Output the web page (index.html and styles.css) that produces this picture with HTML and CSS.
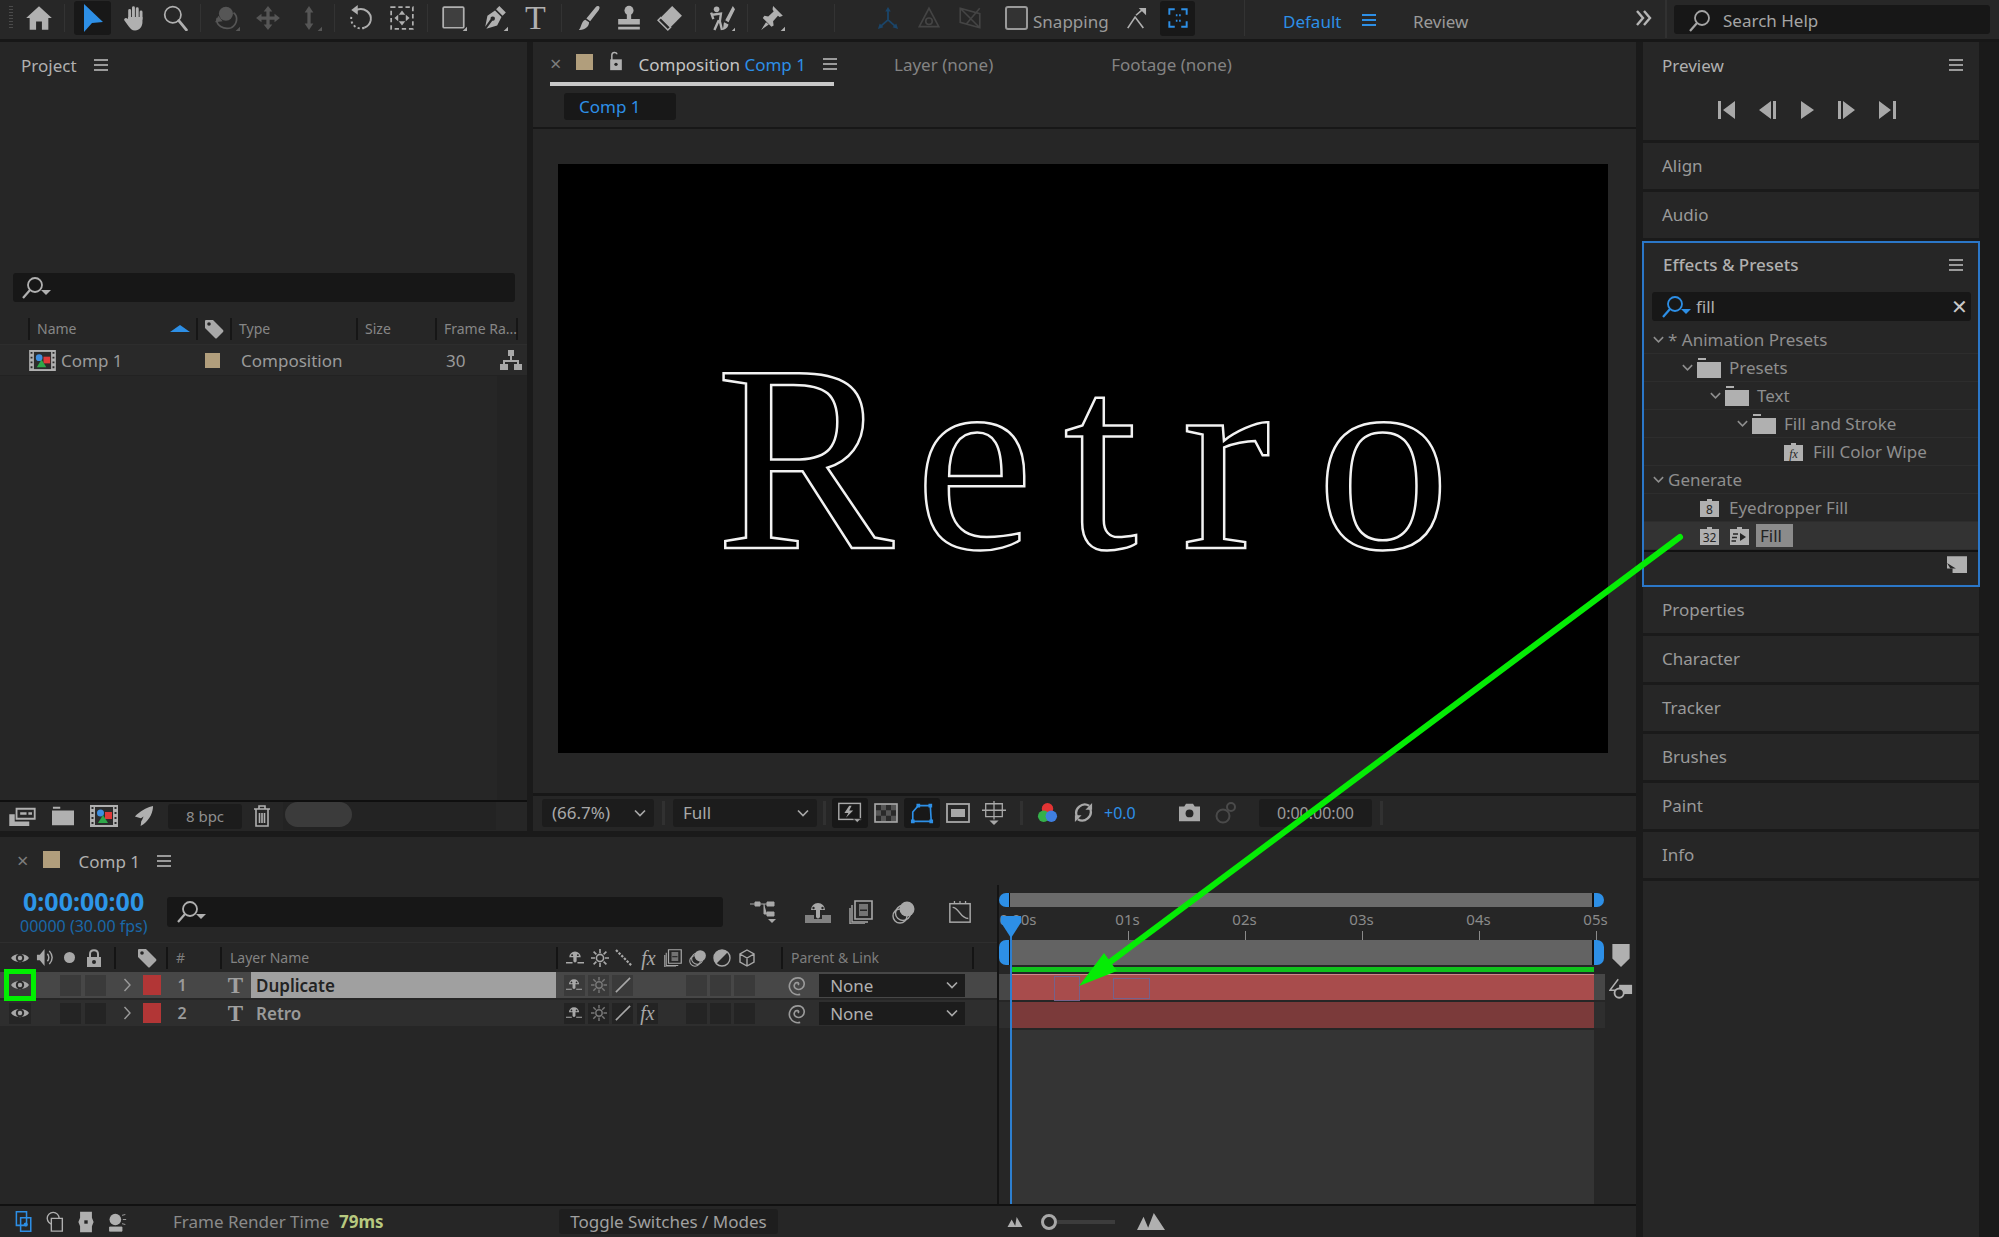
FILE: index.html
```html
<!DOCTYPE html>
<html>
<head>
    <title>After Effects - Retro</title>
    <link rel="stylesheet" href="styles.css">
</head>
<body>
    <!-- icon sprite -->
    <svg class="sprite">
        <symbol id="home" viewBox="0 0 24 24"><path d="M12 2 L23 12 L20 12 L20 22 L14.5 22 L14.5 15 L9.5 15 L9.5 22 L4 22 L4 12 L1 12 Z" fill="currentColor"/></symbol>
        <symbol id="arrow" viewBox="0 0 24 28"><path d="M3 0 L22 18 L11 19 L3 28 Z" fill="currentColor"/></symbol>
        <symbol id="hand" viewBox="0 0 24 24"><path d="M8 12V5M11.5 11V2.5M15 11V3.5M18.5 13V6.5" stroke="currentColor" stroke-width="2.7" stroke-linecap="round" fill="none"/><path d="M6.5 11 H19.8 V16 C19.8 20 17 23.5 13 23.5 C10 23.5 8.5 21.5 7 19.5 L3 14 C2.5 12.5 4.5 11 6.5 13 Z" fill="currentColor"/></symbol>
        <symbol id="zoom" viewBox="0 0 24 24"><circle cx="10" cy="9" r="7.5" fill="none" stroke="currentColor" stroke-width="1.6"/><path d="M15.5 14.5 L22.5 23" stroke="currentColor" stroke-width="2.6" stroke-linecap="round"/></symbol>
        <symbol id="orbit" viewBox="0 0 24 24"><circle cx="11" cy="8" r="6.5" fill="currentColor"/><path d="M3 12 C1 19 9 23 16 21 M18 7 C23 11 21 18 16 21" fill="none" stroke="currentColor" stroke-width="1.6"/><path d="M4 10 L8 15 L1 16 Z M24 24 H20 L24 20Z" fill="currentColor"/></symbol>
        <symbol id="pan" viewBox="0 0 24 24"><path d="M12 1 l4 5 h-2.5 v4.5 h4.5 v-2.5 l5 4 -5 4 v-2.5 h-4.5 v4.5 h2.5 l-4 5 -4-5 h2.5 v-4.5 h-4.5 v2.5 l-5-4 5-4 v2.5 h4.5 v-4.5 h-2.5 Z" fill="currentColor"/></symbol>
        <symbol id="dolly" viewBox="0 0 24 24"><path d="M12 1 l4 6 h-2.5 v10 h2.5 l-4 6 -4-6 h2.5 v-10 h-2.5 Z M24 24 H20 L24 20Z" fill="currentColor"/></symbol>
        <symbol id="rotate" viewBox="0 0 24 24"><path d="M8 4.5 C15 2 22 7 21 14 C20.5 17 18 20 15 21" fill="none" stroke="currentColor" stroke-width="1.8"/><path d="M15 21 C10 23 4 20 3 14 C2.8 12 3 10 4 9" fill="none" stroke="currentColor" stroke-width="1.8" stroke-dasharray="2 2.2"/><path d="M9 0 V9 L3 4.5 Z" fill="currentColor"/></symbol>
        <symbol id="anchor" viewBox="0 0 24 24"><rect x="2" y="2" width="20" height="20" fill="none" stroke="currentColor" stroke-width="1.6" stroke-dasharray="4 2.6"/><path d="M12 5 L15 9 H9 Z M12 19 L15 15 H9 Z M5 12 L8.5 9 V15 Z M19 12 L15.5 9 V15 Z" fill="currentColor"/></symbol>
        <symbol id="rect" viewBox="0 0 24 24"><rect x="2" y="2" width="19" height="19" rx="1" fill="#3f3f3f" stroke="currentColor" stroke-width="1.6"/><path d="M24 24 H20 L24 20Z" fill="currentColor"/></symbol>
        <symbol id="pen" viewBox="0 0 24 24"><path d="M16 1 L22 7 L19 10 L13 4 Z M12 5 L18 11 L14 19 L4 22 L9.5 14.5 A2 2 0 1 0 8 13 L3 20 L5 10 Z" fill="currentColor"/><path d="M24 24 H20 L24 20Z" fill="currentColor"/></symbol>
        <symbol id="brush" viewBox="0 0 24 24"><path d="M21.5 1 C23 1.5 23 3 22 4.5 L14 15 L10.5 12.5 L19 2 C19.8 1.2 20.6 .8 21.5 1 Z M9.5 13.5 L13 16 C13 20 9 23.5 3.5 23 C6 21 5.5 15 9.5 13.5 Z" fill="currentColor"/></symbol>
        <symbol id="stamp" viewBox="0 0 24 24"><circle cx="12" cy="5" r="4.2" fill="currentColor"/><path d="M10 8 h4 v5 h-4 Z M2 13 H22 V18 H2 Z M2 20 H22 V22.5 H2 Z" fill="currentColor"/></symbol>
        <symbol id="eraser" viewBox="0 0 24 24"><path d="M14 1 L23 10 L12.5 20.5 L3.5 11.5 Z" fill="currentColor"/><path d="M3.5 11.5 L12.5 20.5 L10 23 L1 14 Z" fill="none" stroke="currentColor" stroke-width="1.4"/></symbol>
        <symbol id="roto" viewBox="0 0 24 24"><circle cx="7" cy="4" r="2.6" fill="currentColor"/><path d="M3 9 L11 8 L10 15 L12 23 M9 14 L5 23 M2 7 L4 13" fill="none" stroke="currentColor" stroke-width="2.2"/><path d="M22 1 L15 14 L18 16 L24 4 Z M14 16 L18 18 C17 22 14 23 12 23 C14 21 13 18 14 16 Z" fill="currentColor"/><path d="M24 24 H21 L24 21Z" fill="currentColor"/></symbol>
        <symbol id="pin" viewBox="0 0 24 24"><path d="M13 1 L22 10 L19 11 L17.5 10 L13 15 L13.5 19 L11.5 20 L3.5 12 L5 10 L8.5 10.5 L13.5 6 L12.5 4 Z M6.5 16 L2 23 L9 18 Z M24 24 H20 L24 20Z" fill="currentColor"/></symbol>
        <symbol id="axis1" viewBox="0 0 24 24"><path d="M12 3 V14 L3 22 M12 14 L21 22" fill="none" stroke="currentColor" stroke-width="2"/><path d="M12 0 L15 5 H9 Z M1 24 L3 18 L7 22 Z M23 24 L21 18 L17 22 Z" fill="currentColor"/></symbol>
        <symbol id="axis2" viewBox="0 0 24 24"><path d="M12 3 L3 20 H21 Z" fill="none" stroke="currentColor" stroke-width="1.5"/><circle cx="12" cy="15" r="3" fill="none" stroke="currentColor" stroke-width="1.5"/></symbol>
        <symbol id="axis3" viewBox="0 0 24 24"><path d="M3 3 L21 8 V21 L3 16 Z M3 3 L21 21 M21 3 L9 17" fill="none" stroke="currentColor" stroke-width="1.5"/></symbol>
        <symbol id="snap" viewBox="0 0 24 24"><path d="M3 23 L11 11 L20 23 M12 9 L20 2" fill="none" stroke="currentColor" stroke-width="1.8"/><path d="M15 1 H23 V9 Z" fill="currentColor"/></symbol>
        <symbol id="region" viewBox="0 0 24 24"><path d="M4 9V4H9M15 4H20V9M4 15V20H9M15 20H20V15M10 9.5H11.5M13 9.5H14.5M10 14.5H11.5M13 14.5H14.5" fill="none" stroke="currentColor" stroke-width="1.8"/></symbol>
        <symbol id="menu" viewBox="0 0 14 12"><path d="M0 0H14V2H0Z M0 5H14V7H0Z M0 10H14V12H0Z" fill="currentColor"/></symbol>
        <symbol id="search" viewBox="0 0 24 24"><circle cx="14" cy="9" r="7" fill="none" stroke="currentColor" stroke-width="1.8"/><path d="M9 14 L2 22" stroke="currentColor" stroke-width="2.2"/></symbol>
        <symbol id="searchdrop" viewBox="0 0 30 24"><circle cx="14" cy="9" r="7" fill="none" stroke="currentColor" stroke-width="1.8"/><path d="M9 14 L2 22" stroke="currentColor" stroke-width="2.2"/><path d="M20 14 H30 L25 19 Z" fill="currentColor"/></symbol>
        <symbol id="lock-open" viewBox="0 0 16 24"><path d="M3 11 V5 C3 1 9 1 9 4" fill="none" stroke="currentColor" stroke-width="1.8"/><path d="M1 10 H15 V23 H1 Z" fill="currentColor"/><circle cx="8" cy="16" r="2" fill="#262626"/></symbol>
        <symbol id="lock" viewBox="0 0 16 18"><path d="M4 8 V5 C4 0 12 0 12 5 V8" fill="none" stroke="currentColor" stroke-width="2"/><path d="M1 8 H15 V18 H1 Z" fill="currentColor"/><circle cx="8" cy="13" r="2" fill="#262626"/></symbol>
        <symbol id="tag" viewBox="0 0 20 20"><path d="M1 2 Q1 1 2 1 H9 L19 11 Q20 12 19 13 L13 19 Q12 20 11 19 L1 9 Z" fill="currentColor"/><circle cx="5" cy="5" r="1.8" fill="#262626"/></symbol>
        <symbol id="comp" viewBox="0 0 28 22"><path d="M0 0H28V22H0Z" fill="#b0b0b0"/><path d="M5 2H23V20H5Z" fill="#2c2c2c"/><path d="M1.5 2h2v2h-2zM1.5 7h2v2h-2zM1.5 12h2v2h-2zM1.5 17h2v2h-2zM24.5 2h2v2h-2zM24.5 7h2v2h-2zM24.5 12h2v2h-2zM24.5 17h2v2h-2z" fill="#2c2c2c"/><path d="M15 7H22V14H15Z" fill="#e03a3a"/><circle cx="10.5" cy="8" r="3.5" fill="#3f8fe0"/><path d="M13 10 L18 18 H8 Z" fill="#2fa84a"/></symbol>
        <symbol id="flow" viewBox="0 0 22 20"><path d="M8 0H14V6H8Z M0 14H8V20H0Z M14 14H22V20H14Z M10 6H12V10H19V14H17V12H5V14H3V10H10Z" fill="currentColor"/></symbol>
        <symbol id="interpret" viewBox="0 0 28 22"><path d="M8 3 H28 V14 H8 Z" fill="none" stroke="currentColor" stroke-width="2"/><path d="M12 7h7v2.5h-7z M21 7h4v2.5h-4z M0 9H6V22H0Z M6 17 H22 V22 H6 Z" fill="currentColor"/></symbol>
        <symbol id="folder" viewBox="0 0 24 20"><path d="M1 0H9V2H1Z M0 4H24V20H0Z" fill="currentColor"/></symbol>
        <symbol id="rocket" viewBox="0 0 22 22"><path d="M21 0 C21 6 18 14 11 19 L8 21 L9 13 L2 11 L4 9 C10 4 16 1 21 0 Z" fill="currentColor"/><path d="M8 13 L11 11 L9 16 Z" fill="#262626"/></symbol>
        <symbol id="trash" viewBox="0 0 18 22"><path d="M1 4H17M6 4V1H12V4M3 4V21H15V4M6.5 8V18M9 8V18M11.5 8V18" fill="none" stroke="currentColor" stroke-width="1.6"/></symbol>
        <symbol id="chev" viewBox="0 0 14 14"><path d="M2 4.5 L7 9.5 L12 4.5" fill="none" stroke="currentColor" stroke-width="1.7"/></symbol>
        <symbol id="chev-r" viewBox="0 0 14 14"><path d="M4.5 1 L10 7 L4.5 13" fill="none" stroke="currentColor" stroke-width="1.4"/></symbol>
        <symbol id="dbl" viewBox="0 0 18 16"><path d="M2 1 L8 8 L2 15 M9 1 L15 8 L9 15" fill="none" stroke="currentColor" stroke-width="2.4"/></symbol>
        <symbol id="skip-first" viewBox="0 0 20 18"><path d="M1 0H4V18H1Z M18 0V18L6 9Z" fill="currentColor"/></symbol>
        <symbol id="step-back" viewBox="0 0 20 18"><path d="M14 0V18L2 9Z M16 0H19V18H16Z" fill="currentColor"/></symbol>
        <symbol id="play" viewBox="0 0 20 18"><path d="M4 0V18L17 9Z" fill="currentColor"/></symbol>
        <symbol id="step-fwd" viewBox="0 0 20 18"><path d="M1 0H4V18H1Z M6 0 L18 9 L6 18Z" fill="currentColor"/></symbol>
        <symbol id="skip-last" viewBox="0 0 20 18"><path d="M2 0V18L14 9Z M16 0H19V18H16Z" fill="currentColor"/></symbol>
        <symbol id="badge" viewBox="0 0 21 20"><path d="M1 3H8V1H13V3H20V19H1Z" fill="currentColor"/></symbol>
        <symbol id="preset" viewBox="0 0 21 20"><path d="M1 3H8V1H13V3H20V19H1Z" fill="currentColor"/><path d="M4 8H9M3 11.5H8M2.5 15H7" stroke="#262626" stroke-width="1.6"/><path d="M11 7 L17 11 L11 15 Z" fill="#262626"/></symbol>
        <symbol id="fast" viewBox="0 0 30 26"><rect x="1" y="1" width="27" height="20" fill="none" stroke="currentColor" stroke-width="1.8"/><path d="M14 4 L8 13 H13 L10 19 L19 10 H14 L17 4 Z" fill="currentColor"/><path d="M19 20 H29 L24 25 Z" fill="currentColor" stroke="#181818"/></symbol>
        <symbol id="checker" viewBox="0 0 24 20"><rect x="1" y="1" width="22" height="18" fill="#555" stroke="currentColor" stroke-width="1.6"/><path d="M2 2h5v5.3h-5z M12 2h5v5.3h-5z M7 7.3h5v5.4h-5z M17 7.3h5v5.4h-5z M2 12.7h5v5.3h-5z M12 12.7h5v5.3h-5z" fill="#2a2a2a"/></symbol>
        <symbol id="mask" viewBox="0 0 26 22"><path d="M3 20 L3 10 L9 3 H22 L23 20 Z" fill="none" stroke="currentColor" stroke-width="1.8"/><path d="M7 1h4v4h-4z M20 1h4v4h-4z M1 18h4v4h-4z M21 18h4v4h-4z" fill="currentColor"/></symbol>
        <symbol id="screen" viewBox="0 0 24 20"><rect x="1" y="1" width="22" height="18" fill="none" stroke="currentColor" stroke-width="1.8"/><rect x="5" y="6" width="14" height="8" fill="currentColor"/></symbol>
        <symbol id="grid3d" viewBox="0 0 26 26"><path d="M4 3H22V17H4Z M0 10H26 M13 0V20" fill="none" stroke="currentColor" stroke-width="1.4"/><path d="M8 21 H18 L13 26 Z" fill="currentColor"/></symbol>
        <symbol id="rgb" viewBox="0 0 22 22"><circle cx="11" cy="7" r="6" fill="#e23434"/><circle cx="7" cy="15" r="6" fill="#35b04a"/><circle cx="15" cy="15" r="6" fill="#3f7fe0"/></symbol>
        <symbol id="sync" viewBox="0 0 22 22"><path d="M4 15 A9 9 0 0 1 17 4 M18 7 A9 9 0 0 1 5 18" fill="none" stroke="currentColor" stroke-width="2.4"/><path d="M20 1 V8 H13 Z M2 21 V14 H9 Z" fill="currentColor"/></symbol>
        <symbol id="camera" viewBox="0 0 24 20"><path d="M8 0H16L18 3H24V20H0V3H6Z" fill="currentColor"/><circle cx="12" cy="11" r="4.5" fill="#262626"/></symbol>
        <symbol id="snapshot" viewBox="0 0 24 24"><circle cx="9" cy="15" r="6.5" fill="none" stroke="currentColor" stroke-width="2"/><circle cx="17" cy="6" r="4" fill="none" stroke="currentColor" stroke-width="2"/></symbol>
        <symbol id="tree" viewBox="0 0 26 22"><path d="M0 3 H5 M5 1H10V5H5Z M10 3H17M14 3V13H17M17 1H24V5H17Z M17 11H24V15H17Z" fill="currentColor" stroke="currentColor" stroke-width="1"/><path d="M18 18H26L22 22Z" fill="currentColor"/></symbol>
        <symbol id="shy" viewBox="0 0 26 22"><path d="M6 9 A7 7 0 0 1 20 9 H15 V16 Q13 19 11 16 V9 Z" fill="currentColor"/><circle cx="8.5" cy="7" r="1.2" fill="#262626"/><circle cx="17.5" cy="7" r="1.2" fill="#262626"/><path d="M0 14H9V22H0Z M17 14H26V22H17Z M9 18H17V22H9Z" fill="currentColor" opacity=".7"/></symbol>
        <symbol id="frames" viewBox="0 0 24 24"><path d="M6 1H23V19H6Z" fill="none" stroke="currentColor" stroke-width="1.6"/><path d="M10 4H19V16H10Z" fill="currentColor" opacity=".6"/><path d="M11 9.5H18V11H11Z" fill="#262626"/><path d="M3 5V22H19M1 8V24H16" fill="none" stroke="currentColor" stroke-width="1.4"/></symbol>
        <symbol id="motion" viewBox="0 0 24 24"><circle cx="15" cy="9" r="7.5" fill="currentColor"/><circle cx="11" cy="13" r="7.5" fill="none" stroke="currentColor" stroke-width="1.4"/><circle cx="8" cy="16" r="7" fill="none" stroke="currentColor" stroke-width="1.4"/></symbol>
        <symbol id="graph" viewBox="0 0 26 26"><rect x="2" y="4" width="22" height="20" fill="none" stroke="currentColor" stroke-width="1.6"/><path d="M5 8 C12 8 13 20 22 20" fill="none" stroke="currentColor" stroke-width="1.6"/><path d="M7 1V4M13 1V4M19 1V4" stroke="currentColor" stroke-width="1.4"/></symbol>
        <symbol id="sw-shy" viewBox="0 0 22 18"><path d="M4 8 A7 7 0 0 1 18 8 H13 V13 Q11 16 9 13 V8 Z" fill="currentColor"/><circle cx="7.5" cy="5.5" r="1.2" fill="#262626"/><circle cx="14.5" cy="5.5" r="1.2" fill="#262626"/><path d="M0 14H8V15.6H0Z M14 14H22V15.6H14Z" fill="currentColor"/></symbol>
        <symbol id="sw-sun" viewBox="0 0 18 18"><circle cx="9" cy="9" r="3.6" fill="none" stroke="currentColor" stroke-width="1.6"/><path d="M9 0V4M9 14V18M0 9H4M14 9H18M2.6 2.6L5.4 5.4M12.6 12.6L15.4 15.4M2.6 15.4L5.4 12.6M12.6 5.4L15.4 2.6" stroke="currentColor" stroke-width="1.6"/></symbol>
        <symbol id="sw-dots" viewBox="0 0 18 18"><path d="M1 1L17 17" stroke="currentColor" stroke-width="2.2" stroke-dasharray="2.4 1.4"/></symbol>
        <symbol id="sw-slash" viewBox="0 0 18 18"><path d="M1 17L17 1" stroke="currentColor" stroke-width="1.8"/></symbol>
        <symbol id="sw-half" viewBox="0 0 18 18"><circle cx="9" cy="9" r="8" fill="none" stroke="currentColor" stroke-width="1.4"/><path d="M3.3 14.7A8 8 0 0 1 14.7 3.3Z" fill="currentColor"/></symbol>
        <symbol id="sw-cube" viewBox="0 0 18 18"><path d="M9 1L16 5V13L9 17L2 13V5Z M2 5L9 9L16 5 M9 9V17" fill="none" stroke="currentColor" stroke-width="1.4"/></symbol>
        <symbol id="spiral" viewBox="0 0 20 20"><path d="M10 10 C12 8 8 6.5 6.8 9.5 C5.5 13 10 15.5 13.5 13 C17.5 10 15.5 3.5 10 3.5 C4 3.5 .5 9.5 3 14.5 C4.5 17.5 8 19.5 12 18.5" fill="none" stroke="currentColor" stroke-width="1.5"/></symbol>
        <symbol id="eye" viewBox="0 0 20 14"><path d="M1 7 C4 1.5 16 1.5 19 7 C16 12.5 4 12.5 1 7 Z" fill="currentColor"/><circle cx="10" cy="7" r="4.2" fill="#2b2b2b"/><circle cx="10" cy="7" r="2.2" fill="currentColor"/></symbol>
        <symbol id="speaker" viewBox="0 0 20 20"><path d="M1 7H4L9 1V19L4 13H1Z" fill="currentColor"/><path d="M12 6 Q15 10 12 14 M14 3 Q20 10 14 17" fill="none" stroke="currentColor" stroke-width="1.5"/></symbol>
        <symbol id="corner" viewBox="0 0 18 18"><path d="M0 3 H18 V18 H5 V14 H0 Z" fill="currentColor"/><path d="M0 9 L8 14 H3 Z" fill="#262626"/></symbol>
        <symbol id="cmarker" viewBox="0 0 18 24"><path d="M0 0H18V15L9 24L0 15Z" fill="currentColor"/></symbol>
        <symbol id="lift" viewBox="0 0 26 22"><path d="M11 7H25V17H11Z" fill="currentColor"/><path d="M10 1 L1 13 H10" fill="none" stroke="currentColor" stroke-width="1.6"/><circle cx="11" cy="16" r="5" fill="#262626" stroke="currentColor" stroke-width="2"/></symbol>
        <symbol id="st-comp" viewBox="0 0 20 26"><path d="M1 1H13V17H1Z M6 8H18V24H6Z" fill="none" stroke="currentColor" stroke-width="1.8"/><circle cx="12" cy="16" r="2.4" fill="currentColor"/></symbol>
        <symbol id="st-round" viewBox="0 0 20 24"><circle cx="8" cy="8" r="6.5" fill="none" stroke="currentColor" stroke-width="1.5"/><path d="M6 8H18V22H6Z" fill="#262626" stroke="currentColor" stroke-width="1.5"/></symbol>
        <symbol id="st-mid" viewBox="0 0 20 26"><path d="M3 1H17V8L19 13L17 18V25H3V18L1 13L3 8Z" fill="currentColor"/><path d="M8 11H12V15H8Z" fill="#262626"/></symbol>
        <symbol id="st-person" viewBox="0 0 24 24"><circle cx="10" cy="9" r="7" fill="currentColor"/><path d="M3 18H18V23H3Z M18 4L22 3M19 9H23M18 14L22 15" fill="currentColor" stroke="currentColor"/></symbol>
        <symbol id="mtn-s" viewBox="0 0 18 12"><path d="M5 3 L10 12 H0 Z M11 0 L18 12 H9 Z" fill="currentColor"/></symbol>
        <symbol id="mtn-l" viewBox="0 0 30 18"><path d="M7 4 L13 18 H0 Z M18 0 L30 18 H11 Z" fill="currentColor"/></symbol>
    </svg>

    <div class="toolbar">
        <div class="grip"></div>
        <div class="tool"><svg class="ic ic-home"><use href="#home"/></svg></div>
        <div class="tool-sep wide"></div>
        <div class="tool on"><svg class="ic ic-arrow"><use href="#arrow"/></svg></div>
        <div class="tool"><svg class="ic"><use href="#hand"/></svg></div>
        <div class="tool"><svg class="ic"><use href="#zoom"/></svg></div>
        <div class="tool-sep"></div>
        <div class="tool dim"><svg class="ic"><use href="#orbit"/></svg></div>
        <div class="tool dim"><svg class="ic"><use href="#pan"/></svg></div>
        <div class="tool dim"><svg class="ic"><use href="#dolly"/></svg></div>
        <div class="tool-sep"></div>
        <div class="tool"><svg class="ic"><use href="#rotate"/></svg></div>
        <div class="tool"><svg class="ic"><use href="#anchor"/></svg></div>
        <div class="tool-sep"></div>
        <div class="tool"><svg class="ic"><use href="#rect"/></svg></div>
        <div class="tool"><svg class="ic"><use href="#pen"/></svg></div>
        <div class="tool tool-t">T</div>
        <div class="tool-sep"></div>
        <div class="tool"><svg class="ic"><use href="#brush"/></svg></div>
        <div class="tool"><svg class="ic"><use href="#stamp"/></svg></div>
        <div class="tool"><svg class="ic"><use href="#eraser"/></svg></div>
        <div class="tool-sep"></div>
        <div class="tool"><svg class="ic"><use href="#roto"/></svg></div>
        <div class="tool-sep narrow"></div>
        <div class="tool"><svg class="ic"><use href="#pin"/></svg></div>
        <div class="tool-sep axis-gap"></div>
        <div class="tool axis on-dim"><svg class="ic"><use href="#axis1"/></svg></div>
        <div class="tool dim dimmer"><svg class="ic"><use href="#axis2"/></svg></div>
        <div class="tool dim dimmer"><svg class="ic"><use href="#axis3"/></svg></div>
        <div class="check"></div>
        <span class="snap-label">Snapping</span>
        <svg class="ic ic-snap"><use href="#snap"/></svg>
        <div class="region"><svg class="ic"><use href="#region"/></svg></div>
        <div class="tool-sep region-gap"></div>
        <span class="ws-active">Default</span>
        <svg class="menu ws-menu"><use href="#menu"/></svg>
        <span class="ws-review">Review</span>
        <svg class="ic-dbl"><use href="#dbl"/></svg>
        <div class="help-sep"></div>
        <div class="help-search">
            <svg class="ic ic-help"><use href="#search"/></svg>
            <span>Search Help</span>
        </div>
    </div>

    <div class="workspace">
        <div class="left-col">
            <div class="top-row">
                <section class="panel project">
                    <div class="panel-head">
                        <span class="title">Project</span>
                        <svg class="menu"><use href="#menu"/></svg>
                    </div>
                    <div class="proj-thumb"></div>
                    <div class="input proj-search"><svg class="ic-sd"><use href="#searchdrop"/></svg></div>
                    <div class="proj-cols">
                        <div class="pcol pcol-name">Name<span class="sort-up"></span></div>
                        <div class="pcol pcol-tag"><svg class="ic-tag"><use href="#tag"/></svg></div>
                        <div class="pcol pcol-type">Type</div>
                        <div class="pcol pcol-size">Size</div>
                        <div class="pcol pcol-rate">Frame Ra...</div>
                    </div>
                    <div class="proj-row">
                        <svg class="ic-comp"><use href="#comp"/></svg>
                        <span class="proj-name">Comp 1</span>
                        <span class="swatch"></span>
                        <span class="proj-type">Composition</span>
                        <span class="proj-rate">30</span>
                        <svg class="ic-flow"><use href="#flow"/></svg>
                    </div>
                    <div class="proj-list"><div class="vscroll"></div></div>
                    <div class="proj-foot">
                        <svg class="ic-interpret"><use href="#interpret"/></svg>
                        <svg class="ic-folder"><use href="#folder"/></svg>
                        <svg class="ic-comp ic-comp-foot"><use href="#comp"/></svg>
                        <svg class="ic-rocket"><use href="#rocket"/></svg>
                        <div class="bpc">8 bpc</div>
                        <svg class="ic-trash"><use href="#trash"/></svg>
                        <div class="hscroll"><div class="hthumb"></div></div>
                    </div>
                </section>

                <section class="panel comp">
                    <div class="comp-tabs">
                        <div class="comp-tab">
                            <span class="close">×</span>
                            <span class="swatch"></span>
                            <svg class="ic-lock"><use href="#lock-open"/></svg>
                            <span class="title">Composition <span class="blue">Comp 1</span></span>
                            <svg class="menu"><use href="#menu"/></svg>
                        </div>
                        <span class="tab-off tab-layer">Layer (none)</span>
                        <span class="tab-off tab-footage">Footage (none)</span>
                    </div>
                    <div class="comp-sub"><div class="sub-pill">Comp 1</div></div>
                    <div class="viewer">
                        <div class="canvas"><span class="retro"><span class="rt-r">R</span><span class="rt-e">e</span><span class="rt-t">t</span><span class="rt-rr">r</span><span>o</span></span></div>
                    </div>
                    <div class="comp-foot">
                        <div class="dropdown dd-zoom"><span>(66.7%)</span><svg class="chev"><use href="#chev"/></svg></div>
                        <div class="foot-sep"></div>
                        <div class="dropdown dd-full"><span>Full</span><svg class="chev"><use href="#chev"/></svg></div>
                        <div class="foot-sep sep-tight"></div>
                        <div class="ft-btn boxed"><svg class="ft-ic"><use href="#fast"/></svg></div>
                        <div class="ft-btn"><svg class="ft-ic"><use href="#checker"/></svg></div>
                        <div class="ft-btn boxed blue"><svg class="ft-ic"><use href="#mask"/></svg></div>
                        <div class="ft-btn"><svg class="ft-ic"><use href="#screen"/></svg></div>
                        <div class="ft-btn"><svg class="ft-ic"><use href="#grid3d"/></svg></div>
                        <div class="foot-sep sep-rgb"></div>
                        <div class="ft-btn"><svg class="ft-ic ft-sm"><use href="#rgb"/></svg></div>
                        <div class="ft-btn"><svg class="ft-ic ft-sm"><use href="#sync"/></svg></div>
                        <span class="exposure">+0.0</span>
                        <div class="ft-btn btn-camera"><svg class="ft-ic ft-sm"><use href="#camera"/></svg></div>
                        <div class="ft-btn faint"><svg class="ft-ic"><use href="#snapshot"/></svg></div>
                        <div class="timebox">0:00:00:00</div>
                        <div class="foot-sep"></div>
                    </div>
                </section>
            </div>

            <section class="panel timeline">
                <div class="tl-tab">
                    <span class="close">×</span>
                    <span class="swatch swatch-lg"></span>
                    <span class="title">Comp 1</span>
                    <svg class="menu"><use href="#menu"/></svg>
                </div>
                <div class="tl-main">
                    <div class="tl-left">
                        <div class="tl-controls">
                            <div class="timecode">
                                <div class="tc-main">0:00:00:00</div>
                                <div class="tc-sub">00000 (30.00 fps)</div>
                            </div>
                            <div class="input tl-search"><svg class="ic-sd"><use href="#searchdrop"/></svg></div>
                            <svg class="tl-ic tl-tree"><use href="#tree"/></svg>
                            <svg class="tl-ic tl-shy"><use href="#shy"/></svg>
                            <svg class="tl-ic tl-frames"><use href="#frames"/></svg>
                            <svg class="tl-ic tl-motion"><use href="#motion"/></svg>
                            <svg class="tl-ic tl-graph"><use href="#graph"/></svg>
                        </div>
                        <div class="tl-head">
                            <div class="hc hc-av">
                                <svg class="h-ic"><use href="#eye"/></svg>
                                <svg class="h-ic"><use href="#speaker"/></svg>
                                <span class="dot"></span>
                                <svg class="h-ic"><use href="#lock"/></svg>
                            </div>
                            <div class="hc hc-tag"><svg class="ic-tag"><use href="#tag"/></svg></div>
                            <div class="hc hc-num">#</div>
                            <div class="hc hc-name">Layer Name</div>
                            <div class="hc hc-sw">
                                <svg class="sw-ic"><use href="#sw-shy"/></svg>
                                <svg class="sw-ic"><use href="#sw-sun"/></svg>
                                <svg class="sw-ic"><use href="#sw-dots"/></svg>
                                <span class="fx">fx</span>
                                <svg class="sw-ic"><use href="#frames"/></svg>
                                <svg class="sw-ic"><use href="#motion"/></svg>
                                <svg class="sw-ic"><use href="#sw-half"/></svg>
                                <svg class="sw-ic"><use href="#sw-cube"/></svg>
                            </div>
                            <div class="hc hc-parent">Parent &amp; Link</div>
                            <div class="hc hc-end"></div>
                        </div>
                        <div class="layer sel">
                            <i></i>
                            <div class="lc"><span class="eye-box hilite"><svg class="h-ic"><use href="#eye"/></svg></span></div>
                            <i></i>
                            <div class="lc"><span class="sq"></span></div>
                            <div class="lc"><span class="sq"></span></div>
                            <div class="lc lc-chev"><svg class="chev-r"><use href="#chev-r"/></svg></div>
                            <div class="lc"><span class="label-red"></span></div>
                            <div class="lc lc-num">1</div>
                            <div class="lc lc-t">T</div>
                            <div class="lname">Duplicate</div>
                            <i></i>
                            <div class="lc"><span class="sw"><svg class="sw-ic"><use href="#sw-shy"/></svg></span></div>
                            <div class="lc"><span class="sw"><svg class="sw-ic dimmer"><use href="#sw-sun"/></svg></span></div>
                            <div class="lc"><span class="sw"><svg class="sw-ic"><use href="#sw-slash"/></svg></span></div>
                            <i></i>
                            <i></i>
                            <div class="lc"><span class="sq"></span></div>
                            <div class="lc"><span class="sq"></span></div>
                            <div class="lc"><span class="sq"></span></div>
                            <div class="lc"><svg class="spiral"><use href="#spiral"/></svg></div>
                            <div class="none-dd"><span>None</span><svg class="chev"><use href="#chev"/></svg></div>
                            <i></i>
                        </div>
                        <div class="layer">
                            <i></i>
                            <div class="lc"><span class="eye-box"><svg class="h-ic"><use href="#eye"/></svg></span></div>
                            <i></i>
                            <div class="lc"><span class="sq"></span></div>
                            <div class="lc"><span class="sq"></span></div>
                            <div class="lc lc-chev"><svg class="chev-r"><use href="#chev-r"/></svg></div>
                            <div class="lc"><span class="label-red"></span></div>
                            <div class="lc lc-num">2</div>
                            <div class="lc lc-t">T</div>
                            <div class="lname">Retro</div>
                            <i></i>
                            <div class="lc"><span class="sw"><svg class="sw-ic"><use href="#sw-shy"/></svg></span></div>
                            <div class="lc"><span class="sw"><svg class="sw-ic dimmer"><use href="#sw-sun"/></svg></span></div>
                            <div class="lc"><span class="sw"><svg class="sw-ic"><use href="#sw-slash"/></svg></span></div>
                            <div class="lc"><span class="sw fx">fx</span></div>
                            <i></i>
                            <div class="lc"><span class="sq"></span></div>
                            <div class="lc"><span class="sq"></span></div>
                            <div class="lc"><span class="sq"></span></div>
                            <div class="lc"><svg class="spiral"><use href="#spiral"/></svg></div>
                            <div class="none-dd"><span>None</span><svg class="chev"><use href="#chev"/></svg></div>
                            <i></i>
                        </div>
                    </div>
                    <div class="tl-right">
                        <div class="tl-track">
                            <div class="nav">
                                <span class="handle-l"></span>
                                <span class="nav-bar"></span>
                                <span class="handle-r"></span>
                            </div>
                            <div class="ruler">
                                <div class="tick tick-first">0:00s</div>
                                <div class="tick">01s</div>
                                <div class="tick">02s</div>
                                <div class="tick">03s</div>
                                <div class="tick">04s</div>
                                <div class="tick">05s</div>
                            </div>
                            <div class="nav workarea">
                                <span class="handle-l"></span>
                                <span class="nav-bar"></span>
                                <span class="handle-r"></span>
                            </div>
                            <div class="green-bar"></div>
                            <div class="bar-row sel">
                                <div class="bar bar-1">
                                    <span class="kf kf-a"></span>
                                    <span class="kf kf-b"></span>
                                </div>
                            </div>
                            <div class="bar-row">
                                <div class="bar bar-2"></div>
                            </div>
                            <div class="track-empty"></div>
                            <div class="playhead"></div>
                        </div>
                        <div class="tl-side">
                            <svg class="ic-cmarker"><use href="#cmarker"/></svg>
                            <svg class="ic-lift"><use href="#lift"/></svg>
                        </div>
                    </div>
                </div>
                <div class="tl-status">
                    <svg class="st-ic st-blue"><use href="#st-comp"/></svg>
                    <svg class="st-ic"><use href="#st-round"/></svg>
                    <svg class="st-ic"><use href="#st-mid"/></svg>
                    <svg class="st-ic"><use href="#st-person"/></svg>
                    <span class="render">Frame Render Time</span>
                    <span class="render-ms">79ms</span>
                    <div class="toggle">Toggle Switches / Modes</div>
                    <svg class="mtn-s"><use href="#mtn-s"/></svg>
                    <span class="knob"></span>
                    <span class="slider"></span>
                    <svg class="mtn-l"><use href="#mtn-l"/></svg>
                </div>
            </section>
        </div>

        <div class="right-col">
            <section class="panel preview">
                <div class="rp-head">
                    <span class="title">Preview</span>
                    <svg class="menu"><use href="#menu"/></svg>
                </div>
                <div class="transport">
                    <svg class="tr-ic"><use href="#skip-first"/></svg>
                    <svg class="tr-ic"><use href="#step-back"/></svg>
                    <svg class="tr-ic"><use href="#play"/></svg>
                    <svg class="tr-ic"><use href="#step-fwd"/></svg>
                    <svg class="tr-ic"><use href="#skip-last"/></svg>
                </div>
            </section>
            <div class="collapsed">Align</div>
            <div class="collapsed">Audio</div>

            <section class="panel effects">
                <div class="rp-head fx-head">
                    <span class="title strong">Effects &amp; Presets</span>
                    <svg class="menu"><use href="#menu"/></svg>
                </div>
                <div class="input fx-search">
                    <svg class="ic-sd blue"><use href="#searchdrop"/></svg>
                    <span>fill</span>
                    <span class="clear">✕</span>
                </div>
                <div class="tree">
                    <div class="node n0"><svg class="chev"><use href="#chev"/></svg><span>* Animation Presets</span></div>
                    <div class="node n1"><svg class="chev"><use href="#chev"/></svg><svg class="folder"><use href="#folder"/></svg><span>Presets</span></div>
                    <div class="node n2"><svg class="chev"><use href="#chev"/></svg><svg class="folder"><use href="#folder"/></svg><span>Text</span></div>
                    <div class="node n3"><svg class="chev"><use href="#chev"/></svg><svg class="folder"><use href="#folder"/></svg><span>Fill and Stroke</span></div>
                    <div class="node n4"><svg class="badge" viewBox="0 0 21 20"><use href="#badge"/><text x="10.5" y="16" class="badge-fx">fx</text></svg><span>Fill Color Wipe</span></div>
                    <div class="node n0"><svg class="chev"><use href="#chev"/></svg><span>Generate</span></div>
                    <div class="node n5"><svg class="badge" viewBox="0 0 21 20"><use href="#badge"/><text x="10.5" y="16" class="badge-num">8</text></svg><span>Eyedropper Fill</span></div>
                    <div class="node n5 picked"><svg class="badge" viewBox="0 0 21 20"><use href="#badge"/><text x="10.5" y="16" class="badge-num">32</text></svg><svg class="badge second"><use href="#preset"/></svg><span class="fill-name">Fill</span></div>
                </div>
                <div class="fx-foot"><svg class="ic-corner"><use href="#corner"/></svg></div>
            </section>

            <div class="collapsed">Properties</div>
            <div class="collapsed">Character</div>
            <div class="collapsed">Tracker</div>
            <div class="collapsed">Brushes</div>
            <div class="collapsed">Paint</div>
            <div class="collapsed">Info</div>
            <div class="rp-fill"></div>
        </div>
    </div>

    <!-- annotation on top of the screenshot -->
    <svg class="annotation" viewBox="0 0 1999 1237">
        <path d="M1680 537 L1110 962" stroke="#05ec05" stroke-width="6" stroke-linecap="round" fill="none"/>
        <path d="M1079 986 L1104 953 L1117 971 Z" fill="#05ec05"/>
    </svg>
</body>
</html>
```

FILE: styles.css
```css
* {
    box-sizing: border-box;
}
html, body {
    margin: 0;
    padding: 0;
}
body {
    width: 1999px;
    height: 1237px;
    overflow: hidden;
    position: relative;
    background-color: #1a1a1a;
    color: #9a9a9a;
    font-family: "Noto Sans", "Open Sans", sans-serif;
    font-size: 17px;
    line-height: 1;
}
svg {
    display: block;
    flex: none;
}
i {
    display: block;
}
.sprite {
    position: absolute;
    width: 0;
    height: 0;
}
.blue {
    color: #2d8fe6;
}
.menu {
    width: 14px;
    height: 12px;
    color: #9a9a9a;
}
.title {
    color: #b0b0b0;
}
.title.strong {
    font-weight: 500;
}

/* toolbar */
.toolbar {
    height: 42px;
    display: flex;
    align-items: center;
    padding-left: 9px;
    padding-bottom: 3px;
    background-color: #272727;
    border-bottom: 3px solid #171717;
}
.grip {
    width: 4px;
    height: 24px;
    margin-right: 5px;
    background: repeating-linear-gradient(to bottom, #4b4b4b 0, #4b4b4b 1px, transparent 1px, transparent 3px);
}
.tool {
    width: 41px;
    height: 36px;
    display: flex;
    align-items: center;
    justify-content: center;
    color: #b0b0b0;
}
.tool.dim {
    color: #565656;
}
.tool.dimmer {
    color: #444;
}
.tool.on {
    position: relative;
    color: #2d8fe6;
}
.tool.on::before {
    content: "";
    position: absolute;
    left: 2px;
    right: 2px;
    top: 1px;
    bottom: 1px;
    border-radius: 3px;
    background-color: #181818;
}
.tool.on svg {
    position: relative;
}
.tool.on-dim {
    color: #1b4569;
}
.tool.on-dim svg {
    width: 22px;
    height: 22px;
}
.tool-t {
    font-family: "Liberation Serif", serif;
    font-size: 34px;
}
.ic {
    width: 26px;
    height: 26px;
}
.ic-home {
    width: 28px;
    height: 28px;
}
.ic-arrow {
    width: 24px;
    height: 28px;
}
.tool-sep {
    width: 11px;
    height: 36px;
    position: relative;
}
.tool-sep::after {
    content: "";
    position: absolute;
    left: 5px;
    top: 4px;
    bottom: 4px;
    width: 1px;
    background-color: #333;
}
.tool-sep.wide {
    width: 13px;
}
.tool-sep.narrow {
    width: 9px;
}
.tool-sep.axis-gap {
    width: 75px;
}
.tool-sep.axis-gap::after {
    left: 42px;
}
.check {
    width: 23px;
    height: 24px;
    margin-left: 15px;
    border: 2px solid #9a9a9a;
    border-radius: 3px;
    background-color: #333;
}
.snap-label {
    margin: 6px 0 0 5px;
    width: 74px;
}
.ic-snap {
    width: 22px;
    height: 22px;
    margin-left: 18px;
    color: #b0b0b0;
}
.region {
    width: 35px;
    height: 35px;
    margin-left: 13px;
    display: flex;
    align-items: center;
    justify-content: center;
    background-color: #181818;
    border-radius: 3px;
    color: #2d8fe6;
}
.tool-sep.region-gap {
    width: 88px;
}
.tool-sep.region-gap::after {
    left: 49px;
    top: 0;
    bottom: 0;
}
.ws-active {
    margin-top: 6px;
    color: #2d8fe6;
    width: 57px;
}
.ws-menu {
    margin: 4px 0 0 22px;
    color: #2d8fe6;
}
.ws-review {
    margin: 6px 0 0 37px;
    width: 58px;
}
.ic-dbl {
    width: 18px;
    height: 16px;
    margin-left: 164px;
    color: #b5b5b5;
}
.help-sep {
    width: 2px;
    height: 39px;
    margin-left: 12px;
    background-color: #313131;
}
.help-search {
    width: 316px;
    height: 29px;
    margin: 3px 0 0 7px;
    display: flex;
    align-items: center;
    gap: 11px;
    padding: 2px 0 0 14px;
    border-radius: 3px;
    background-color: #171717;
    color: #a5a5a5;
}
.ic-help {
    width: 24px;
    height: 24px;
    color: #a5a5a5;
}

/* layout */
.workspace {
    height: 1195px;
    display: flex;
}
.left-col {
    width: 1636px;
    display: flex;
    flex-direction: column;
    gap: 6px;
}
.top-row {
    height: 789px;
    display: flex;
    gap: 6px;
}
.panel {
    background-color: #262626;
}
.right-col {
    width: 336px;
    margin-left: 7px;
    display: flex;
    flex-direction: column;
}
.input {
    display: flex;
    align-items: center;
    background-color: #171717;
    border-radius: 3px;
}
.ic-sd {
    width: 30px;
    height: 24px;
    color: #b0b0b0;
}
.close {
    color: #7d7d7d;
    font-size: 20px;
}
.swatch {
    display: block;
    width: 16px;
    height: 16px;
    flex: none;
    background-color: #b19e7c;
}

/* project */
.project {
    width: 527px;
    display: flex;
    flex-direction: column;
}
.panel-head {
    height: 46px;
    padding-left: 21px;
    display: flex;
    align-items: center;
    gap: 17px;
}
.proj-thumb {
    height: 185px;
}
.proj-search {
    height: 29px;
    width: 502px;
    margin-left: 13px;
    padding-left: 8px;
}
.proj-cols {
    height: 32px;
    margin-top: 11px;
    padding-left: 28px;
    display: flex;
    align-items: center;
    font-size: 14px;
    color: #868686;
    border-bottom: 1px solid #2d2d2d;
}
.pcol {
    height: 22px;
    display: flex;
    align-items: center;
    padding-left: 7px;
    border-left: 2px solid #161616;
}
.pcol-name {
    width: 168px;
    justify-content: space-between;
    padding-right: 6px;
}
.pcol-tag {
    width: 34px;
    padding-left: 6px;
}
.pcol-type {
    width: 126px;
}
.pcol-size {
    width: 79px;
}
.pcol-rate {
    width: 83px;
    padding-right: 0;
    white-space: nowrap;
    border-right: 2px solid #161616;
}
.sort-up {
    width: 0;
    height: 0;
    border-left: 10px solid transparent;
    border-right: 10px solid transparent;
    border-bottom: 7px solid #2d8fe6;
}
.ic-tag {
    width: 20px;
    height: 20px;
    color: #a8a8a8;
}
.proj-row {
    height: 31px;
    display: flex;
    align-items: center;
    padding-left: 29px;
    background-color: #292929;
    border-bottom: 1px solid #222;
}
.ic-comp {
    width: 27px;
    height: 21px;
}
.proj-name {
    margin-left: 5px;
    width: 144px;
}
.proj-row .swatch {
    width: 15px;
    height: 15px;
}
.proj-type {
    margin-left: 21px;
    width: 205px;
}
.proj-rate {
    width: 54px;
}
.ic-flow {
    width: 22px;
    height: 20px;
    color: #a8a8a8;
}
.proj-list {
    height: 426px;
    display: flex;
    justify-content: flex-end;
    border-bottom: 2px solid #0f0f0f;
}
.vscroll {
    width: 30px;
    background-color: #232323;
}
.proj-foot {
    height: 28px;
    display: flex;
    align-items: center;
    padding-left: 8px;
    color: #b0b0b0;
}
.ic-interpret {
    width: 28px;
    height: 20px;
}
.ic-folder {
    width: 22px;
    height: 20px;
    margin-left: 16px;
}
.ic-comp-foot {
    width: 28px;
    height: 22px;
    margin-left: 16px;
}
.ic-rocket {
    width: 21px;
    height: 21px;
    margin-left: 15px;
}
.bpc {
    width: 74px;
    height: 25px;
    margin-left: 14px;
    display: flex;
    align-items: center;
    justify-content: center;
    font-size: 15px;
    color: #8e8e8e;
    background-color: #1c1c1c;
    border-radius: 3px;
}
.ic-trash {
    width: 18px;
    height: 22px;
    margin-left: 11px;
}
.hscroll {
    width: 213px;
    height: 28px;
    margin-left: 12px;
    background-color: #232323;
}
.hthumb {
    width: 67px;
    height: 25px;
    margin-left: 2px;
    border-radius: 13px;
    background-color: #3b3b3b;
}

/* composition */
.comp {
    flex: 1;
    display: flex;
    flex-direction: column;
}
.comp-tabs {
    height: 44px;
    display: flex;
    align-items: stretch;
}
.comp-tab {
    width: 284px;
    margin-left: 17px;
    display: flex;
    align-items: center;
    padding-top: 4px;
    border-bottom: 4px solid #c8c8c8;
}
.comp-tab .swatch {
    margin-left: 15px;
    margin-bottom: 4px;
    width: 17px;
}
.ic-lock {
    width: 14px;
    height: 20px;
    margin-left: 16px;
    margin-bottom: 6px;
    color: #b0b0b0;
}
.comp-tab .title {
    margin-left: 15px;
    white-space: nowrap;
    color: #c4c4c4;
}
.comp-tab .menu {
    margin-left: 17px;
}
.tab-off {
    display: flex;
    align-items: center;
    padding-top: 1px;
    color: #838383;
}
.tab-layer {
    margin-left: 60px;
}
.tab-footage {
    margin-left: 118px;
}
.comp-sub {
    height: 41px;
    padding: 7px 0 0 31px;
}
.sub-pill {
    width: 112px;
    height: 27px;
    padding-left: 15px;
    display: flex;
    align-items: center;
    color: #2d8fe6;
    background-color: #181818;
    border-radius: 3px;
}
.viewer {
    height: 669px;
    padding: 35px 0 0 25px;
    border-top: 2px solid #171717;
    border-bottom: 3px solid #171717;
}
.canvas {
    width: 1050px;
    height: 589px;
    display: flex;
    align-items: center;
    justify-content: center;
    background-color: #000;
    overflow: hidden;
}
.retro {
    font-family: "Liberation Serif", serif;
    font-size: 267px;
    color: #000;
    -webkit-text-stroke: 2.5px #f2f2f2;
}
.rt-r {
    letter-spacing: 21px;
}
.rt-e {
    letter-spacing: 30px;
}
.rt-t {
    letter-spacing: 44px;
}
.rt-rr {
    letter-spacing: 46px;
}
.comp-foot {
    height: 35px;
    display: flex;
    align-items: center;
    padding: 0 0 2px 9px;
}
.dropdown {
    height: 28px;
    display: flex;
    align-items: center;
    justify-content: space-between;
    padding: 0 7px 0 10px;
    background-color: #1c1c1c;
    border-radius: 3px;
    color: #a8a8a8;
}
.chev {
    width: 14px;
    height: 14px;
    color: #a8a8a8;
}
.dd-zoom {
    width: 112px;
}
.dd-full {
    width: 144px;
}
.foot-sep {
    width: 3px;
    height: 24px;
    margin: 0 8px;
    background-color: #313131;
}
.foot-sep.sep-tight {
    margin: 0 6px;
}
.foot-sep.sep-rgb {
    margin: 0 6px 0 8px;
}
.ft-btn {
    width: 36px;
    height: 30px;
    display: flex;
    align-items: center;
    justify-content: center;
    color: #a8a8a8;
    border-radius: 3px;
}
.ft-btn.boxed {
    background-color: #181818;
}
.ft-btn.blue {
    color: #2d8fe6;
}
.ft-btn.faint {
    color: #4a4a4a;
    margin-left: 1px;
}
.ft-ic {
    width: 24px;
    height: 24px;
}
.ft-ic.ft-sm {
    width: 21px;
    height: 21px;
}
.exposure {
    margin-left: 3px;
    width: 45px;
    color: #2d8fe6;
    font-size: 16px;
}
.btn-camera {
    margin-left: 22px;
}
.timebox {
    width: 113px;
    height: 28px;
    margin-left: 15px;
    display: flex;
    align-items: center;
    justify-content: center;
    font-size: 16px;
    background-color: #1c1c1c;
    border-radius: 3px;
}

/* timeline */
.timeline {
    flex: 1;
    display: flex;
    flex-direction: column;
}
.tl-tab {
    height: 48px;
    display: flex;
    align-items: center;
    padding-left: 17px;
}
.swatch-lg {
    width: 17px;
    height: 17px;
    margin: 0 0 4px 15px;
}
.tl-tab .title {
    margin-left: 18px;
}
.tl-tab .menu {
    margin-left: 17px;
}
.tl-main {
    height: 321px;
    display: flex;
    border-bottom: 2px solid #111;
}
.tl-left {
    width: 999px;
    background-color: #262626;
    border-right: 2px solid #141414;
}
.tl-controls {
    height: 58px;
    display: flex;
    align-items: center;
    padding: 0 0 4px 20px;
    border-bottom: 1px solid #2e2e2e;
}
.timecode {
    width: 147px;
}
.tc-main {
    color: #2d96e8;
    font-size: 25px;
    font-weight: 700;
    padding-left: 3px;
}
.tc-sub {
    margin-top: 4px;
    color: #1a68a8;
    font-size: 16px;
    white-space: nowrap;
}
.tl-search {
    width: 556px;
    height: 30px;
    padding-left: 9px;
}
.tl-ic {
    color: #a8a8a8;
    width: 26px;
    height: 24px;
}
.tl-tree {
    margin-left: 27px;
}
.tl-shy {
    margin-left: 29px;
}
.tl-frames {
    margin-left: 17px;
}
.tl-motion {
    margin-left: 17px;
}
.tl-graph {
    margin-left: 30px;
}
.tl-head {
    height: 29px;
    display: flex;
    align-items: center;
    font-size: 14px;
    color: #7e7e7e;
}
.hc {
    height: 22px;
    display: flex;
    align-items: center;
    border-left: 2px solid #141414;
}
.hc-av {
    width: 114px;
    padding-left: 10px;
    gap: 6px;
    border-left: 0;
    color: #a8a8a8;
}
.hc-av .h-ic:nth-child(2) {
    width: 19px;
    height: 19px;
}
.hc-av .h-ic:nth-child(4) {
    width: 16px;
    height: 18px;
    margin-left: 5px;
}
.dot {
    width: 11px;
    height: 11px;
    border-radius: 50%;
    margin-left: 3px;
    background-color: #a8a8a8;
}
.h-ic {
    width: 20px;
    height: 14px;
    color: #a8a8a8;
}
.hc-tag {
    width: 52px;
    padding-left: 21px;
}
.hc-num {
    width: 54px;
    padding-left: 8px;
}
.hc-name {
    width: 336px;
    padding-left: 8px;
    color: #838383;
}
.hc-sw {
    width: 225px;
    padding-left: 8px;
    gap: 6.5px;
    color: #a8a8a8;
}
.hc-parent {
    width: 191px;
    padding-left: 8px;
    color: #7e7e7e;
}
.hc-end {
    width: 25px;
}
.sw-ic {
    width: 18px;
    height: 18px;
    color: #a8a8a8;
}
.sw-ic.dimmer {
    color: #777;
}
.fx {
    font-family: "Liberation Serif", serif;
    font-style: italic;
    font-size: 20px;
    color: #a8a8a8;
    width: 18px;
    text-align: center;
}
.layer {
    height: 26px;
    margin-bottom: 2px;
    display: grid;
    grid-template-columns: 8px repeat(4, 25px) 35px 23px 54px 31px 305px 6px repeat(8, 24.4px) 62px 146px 32px;
    align-items: center;
    background-color: #2e2e2e;
}
.layer.sel {
    background-color: #474747;
}
.lc {
    display: flex;
    align-items: center;
    justify-content: center;
    height: 26px;
}
.eye-box {
    display: flex;
    align-items: center;
    justify-content: center;
    width: 22px;
    height: 21px;
    margin-left: -1px;
    background-color: #252525;
}
.eye-box.hilite {
    background-color: #3a3a3a;
    outline: 5px solid #00f000;
    width: 22px;
    height: 22px;
}
.sq {
    display: block;
    width: 21px;
    height: 21px;
    background-color: #242424;
}
.sel .sq {
    background-color: #3a3a3a;
}
.chev-r {
    width: 14px;
    height: 14px;
    color: #9a9a9a;
    margin-left: 2px;
}
.label-red {
    display: block;
    width: 20px;
    height: 20px;
    margin-right: 5px;
    background-color: #b23636;
}
.lc-num {
    font-weight: 600;
    padding-right: 22px;
    color: #9a9a9a;
    font-size: 16px;
}
.lc-t {
    font-family: "Liberation Serif", serif;
    font-size: 23px;
    font-weight: 700;
    color: #a0a0a0;
}
.lname {
    height: 26px;
    display: flex;
    align-items: center;
    padding-left: 5px;
    font-weight: 600;
    color: #9a9a9a;
}
.sel .lname {
    background-color: #a0a0a0;
    color: #232323;
    font-weight: 600;
}
.sw {
    width: 21px;
    height: 21px;
    display: flex;
    align-items: center;
    justify-content: center;
    background-color: #232323;
}
.sel .sw {
    background-color: #3a3a3a;
}
.sw .sw-ic {
    width: 16px;
    height: 16px;
}
.spiral {
    width: 22px;
    height: 22px;
    margin-left: 20px;
    color: #9a9a9a;
}
.none-dd {
    height: 23px;
    display: flex;
    align-items: center;
    justify-content: space-between;
    padding: 0 6px 0 11px;
    background-color: #1c1c1c;
    color: #b0b0b0;
}
.tl-right {
    flex: 1;
    display: flex;
    background-color: #262626;
}
.tl-track {
    width: 606px;
    position: relative;
    padding-top: 8px;
    display: flex;
    flex-direction: column;
}
.nav {
    height: 14px;
    display: flex;
}
.handle-l, .handle-r {
    width: 10px;
    background-color: #2d8fe6;
}
.handle-l {
    border-radius: 7px 0 0 7px;
}
.handle-r {
    border-radius: 0 7px 7px 0;
}
.nav-bar {
    width: 585px;
    background-color: #6b6b6b;
    border-left: 1px solid #111;
    border-right: 2px solid #111;
}
.workarea {
    height: 25px;
}
.workarea .nav-bar {
    background-color: #636363;
}
.ruler {
    height: 33px;
    margin-left: -47px;
    display: flex;
}
.tick {
    width: 117px;
    flex: none;
    position: relative;
    padding-top: 5px;
    text-align: center;
    font-size: 15px;
    color: #8a8a8a;
    white-space: nowrap;
}
.tick-first {
    padding-left: 15px;
}
.tick::after {
    content: "";
    position: absolute;
    left: 50%;
    top: 24px;
    width: 1px;
    height: 9px;
    background-color: #8a8a8a;
}
.tick-first::after {
    display: none;
}
.green-bar {
    height: 5px;
    margin: 2px 11px 2px 12px;
    background-color: #10c21c;
}
.bar-row {
    height: 26px;
    margin-bottom: 2px;
    padding: 0 11px 0 12px;
    background-color: #2e2e2e;
}
.bar-row.sel {
    background-color: #474747;
}
.bar {
    height: 26px;
    position: relative;
}
.bar-1 {
    background-color: #a84c4c;
    border-top: 1px solid #cf8a8a;
}
.bar-2 {
    background-color: #7b3a3a;
}
.kf {
    position: absolute;
    border: 1px solid #75628c;
}
.kf-a {
    left: 43px;
    top: 1px;
    width: 26px;
    height: 25px;
}
.kf-b {
    left: 102px;
    top: 3px;
    width: 37px;
    height: 21px;
}
.track-empty {
    flex: 1;
    margin: 0 11px 0 12px;
    background-color: #343434;
}
.playhead {
    position: absolute;
    left: 11px;
    top: 38px;
    bottom: 0;
    width: 2px;
    background-color: #2d7fd0;
}
.playhead::before {
    content: "";
    position: absolute;
    left: -9px;
    top: -7px;
    width: 20px;
    height: 22px;
    background-color: #2d8fe6;
    clip-path: polygon(0 0, 100% 0, 100% 30%, 50% 100%, 0 30%);
}
.tl-side {
    flex: 1;
    padding: 59px 0 0 7px;
    color: #b0b0b0;
}
.ic-cmarker {
    width: 18px;
    height: 23px;
}
.ic-lift {
    width: 24px;
    height: 21px;
    margin: 11px 0 0 -3px;
}
.tl-status {
    flex: 1;
    display: flex;
    align-items: center;
    padding-left: 14px;
    color: #b0b0b0;
}
.st-ic {
    width: 20px;
    height: 22px;
    margin-right: 11px;
}
.st-blue {
    color: #2d8fe6;
}
.render {
    margin-left: 35px;
    width: 156px;
    white-space: nowrap;
    color: #8a8a8a;
}
.render-ms {
    margin-left: 10px;
    width: 45px;
    color: #b7c97f;
    font-weight: 700;
}
.toggle {
    width: 219px;
    height: 25px;
    margin-left: 175px;
    display: flex;
    align-items: center;
    justify-content: center;
    background-color: #1e1e1e;
    border-radius: 3px;
    color: #a0a0a0;
    white-space: nowrap;
}
.mtn-s {
    width: 16px;
    height: 10px;
    margin-left: 229px;
}
.knob {
    width: 16px;
    height: 16px;
    margin-left: 18px;
    border: 3px solid #a8a8a8;
    border-radius: 50%;
}
.slider {
    width: 58px;
    height: 4px;
    background-color: #3c3c3c;
}
.mtn-l {
    width: 28px;
    height: 17px;
    margin-left: 22px;
}

/* right column */
.preview {
    height: 101px;
    border-bottom: 3px solid #1a1a1a;
}
.rp-head {
    height: 46px;
    display: flex;
    align-items: center;
    justify-content: space-between;
    padding: 0 16px 0 19px;
}
.transport {
    display: flex;
    justify-content: center;
    gap: 20px;
    padding: 13px 8px 0 0;
    color: #a8a8a8;
}
.tr-ic {
    width: 20px;
    height: 18px;
}
.collapsed {
    height: 49px;
    padding: 0 0 2px 19px;
    display: flex;
    align-items: center;
    background-color: #262626;
    border-bottom: 3px solid #1a1a1a;
    color: #9a9a9a;
}
.effects {
    height: 346px;
    margin-left: -1px;
    width: 338px;
    display: flex;
    flex-direction: column;
    border: 2px solid #2b77c8;
}
.fx-head {
    height: 43px;
    padding-right: 15px;
}
.fx-search {
    height: 29px;
    margin: 6px 7px 0 8px;
    padding-left: 9px;
    gap: 5px;
    color: #b0b0b0;
}
.fx-search .ic-sd {
    color: #2d8fe6;
}
.clear {
    margin-left: auto;
    margin-right: 3px;
    font-size: 20px;
    color: #c8c8c8;
}
.tree {
    margin-top: 5px;
    color: #8e8e8e;
}
.node {
    height: 28px;
    display: flex;
    align-items: center;
    border-bottom: 1px solid #2d2d2d;
}
.node .chev {
    width: 13px;
    height: 13px;
    margin-right: 3px;
    color: #8e8e8e;
}
.folder {
    width: 24px;
    height: 20px;
    margin-right: 8px;
    color: #b0b0b0;
}
.n0 {
    padding-left: 8px;
}
.n1 {
    padding-left: 37px;
}
.n2 {
    padding-left: 65px;
}
.n3 {
    padding-left: 92px;
}
.n4 {
    padding-left: 139px;
}
.n5 {
    padding-left: 55px;
}
.badge {
    width: 21px;
    height: 20px;
    margin-right: 9px;
    color: #b0b0b0;
}
.badge.second {
    margin-right: 6px;
}
.badge text {
    text-anchor: middle;
    fill: #262626;
    font-size: 12px;
}
.badge-fx {
    font-family: "Liberation Serif", serif;
    font-style: italic;
}
.badge-num {
    font-family: "Noto Sans", sans-serif;
}
.picked {
    background-color: #333;
}
.fill-name {
    height: 23px;
    width: 37px;
    padding-left: 4px;
    display: flex;
    align-items: center;
    background-color: #8b8b8b;
    color: #232323;
}
.fx-foot {
    flex: 1;
    display: flex;
    justify-content: flex-end;
    padding: 1px 11px 0 0;
    border-top: 2px solid #111;
    color: #b0b0b0;
}
.ic-corner {
    width: 20px;
    height: 20px;
}
.rp-fill {
    flex: 1;
    background-color: #262626;
}

/* arrow drawn over the screenshot */
.annotation {
    position: absolute;
    left: 0;
    top: 0;
    width: 1999px;
    height: 1237px;
    pointer-events: none;
}
```
